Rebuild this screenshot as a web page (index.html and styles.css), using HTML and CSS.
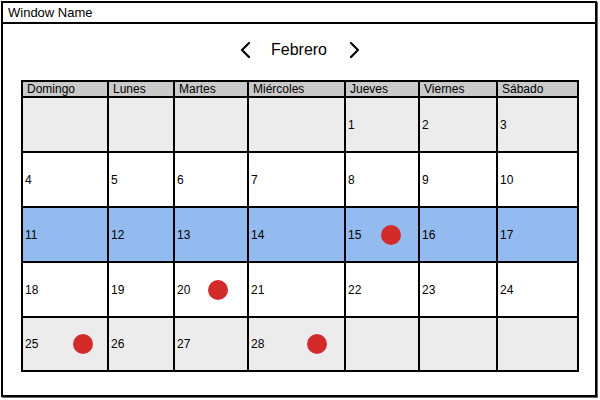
FILE: index.html
```html
<!DOCTYPE html>
<html lang="es">
  <head>
    <meta charset="UTF-8" />
    <meta name="viewport" content="width=device-width, initial-scale=1.0" />
    <title>Calendario</title>
    <link rel="stylesheet" href="styles.css">
  </head>
  <body>
    <div class="window">
      <div class="title-bar">Window Name</div>
      <div class="content">
        <div class="month-nav">
          <svg class="chevron" width="12" height="16" viewBox="0 0 12 16">
            <path d="M10 1 L3 8 L10 15" fill="none" stroke="#000" stroke-width="2.2" stroke-linecap="round" stroke-linejoin="round" />
          </svg>
          <span class="month">Febrero</span>
          <svg class="chevron" width="12" height="16" viewBox="0 0 12 16">
            <path d="M2 1 L9 8 L2 15" fill="none" stroke="#000" stroke-width="2.2" stroke-linecap="round" stroke-linejoin="round" />
          </svg>
        </div>

        <div class="calendar">
          <div class="day-name">Domingo</div>
          <div class="day-name">Lunes</div>
          <div class="day-name">Martes</div>
          <div class="day-name">Miércoles</div>
          <div class="day-name">Jueves</div>
          <div class="day-name">Viernes</div>
          <div class="day-name">Sábado</div>

          <div class="cell grey"></div>
          <div class="cell grey"></div>
          <div class="cell grey"></div>
          <div class="cell grey"></div>
          <div class="cell grey">1</div>
          <div class="cell grey">2</div>
          <div class="cell grey">3</div>

          <div class="cell">4</div>
          <div class="cell">5</div>
          <div class="cell">6</div>
          <div class="cell">7</div>
          <div class="cell">8</div>
          <div class="cell">9</div>
          <div class="cell">10</div>

          <div class="cell blue">11</div>
          <div class="cell blue">12</div>
          <div class="cell blue">13</div>
          <div class="cell blue">14</div>
          <div class="cell blue">15 <span class="dot"></span></div>
          <div class="cell blue">16</div>
          <div class="cell blue">17</div>

          <div class="cell">18</div>
          <div class="cell">19</div>
          <div class="cell">20 <span class="dot near"></span></div>
          <div class="cell">21</div>
          <div class="cell">22</div>
          <div class="cell">23</div>
          <div class="cell">24</div>

          <div class="cell grey">25 <span class="dot far"></span></div>
          <div class="cell grey">26</div>
          <div class="cell grey">27</div>
          <div class="cell grey">28 <span class="dot"></span></div>
          <div class="cell grey"></div>
          <div class="cell grey"></div>
          <div class="cell grey"></div>
        </div>
      </div>
    </div>
  </body>
</html>
```

FILE: styles.css
```css
body {
  margin: 0;
  background-color: white;
  font-family: "Liberation Sans", Arial, sans-serif;
  color: #000;
}
.window {
  margin: 1px;
  width: 596px;
  height: 396px;
  box-sizing: border-box;
  border: 2px solid #000;
  box-shadow: 1px 1px 0 #666;
}
.title-bar {
  height: 19px;
  line-height: 19px;
  padding-left: 5px;
  font-size: 13px;
  border-bottom: 2px solid #000;
}
.content {
  padding: 16px 0 0 18px;
}
.month-nav {
  width: 558px;
  height: 20px;
  margin-bottom: 20px;
  display: flex;
  justify-content: center;
  align-items: center;
}
.month {
  font-size: 16px;
  margin: 0 22px 0 20px;
}
.calendar {
  width: 558px;
  box-sizing: border-box;
  border: 2px solid #000;
  background-color: #000;
  display: grid;
  grid-template-columns: 84px 64px 72px 95px 72px 76px 79px;
  grid-template-rows: 14px repeat(4, 53px) 52px;
  gap: 2px;
}
.day-name {
  background-color: #cacaca;
  font-size: 12px;
  line-height: 14px;
  padding-left: 4px;
}
.cell {
  background-color: white;
  font-size: 12px;
  padding: 0 17px 0 2px;
  display: flex;
  align-items: center;
}
.cell.grey {
  background-color: #ececec;
}
.cell.blue {
  background-color: #93bbef;
}
.dot {
  width: 20px;
  height: 20px;
  border-radius: 50%;
  background-color: #d32a2a;
  margin-left: auto;
}
.dot.near {
  margin-right: 2px;
}
.dot.far {
  margin-right: -3px;
}
```
